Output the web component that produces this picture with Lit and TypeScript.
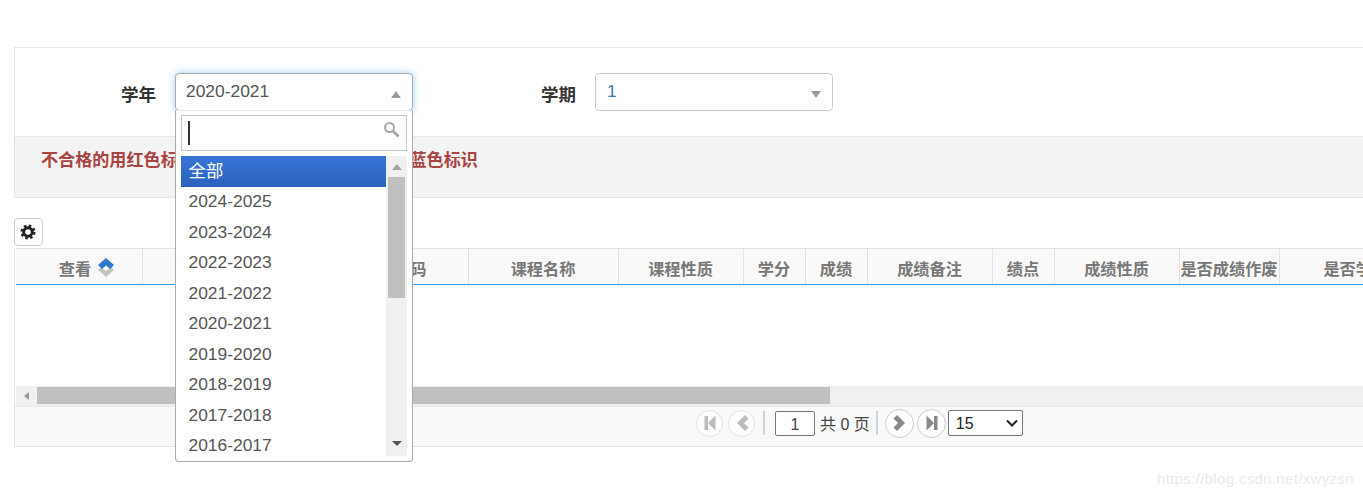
import { LitElement, html, css, svg } from "lit";
import { customElement } from "lit/decorators.js";

const YEARS = ["2024-2025","2023-2024","2022-2023","2021-2022","2020-2021","2019-2020","2018-2019","2017-2018","2016-2017"];
const COLS: [string, number][] = [
  ["", 126],["", 52],["课程代码", 148],["课程名称", 150],["课程性质", 125],["学分", 62],["成绩", 62],
  ["成绩备注", 125],["绩点", 62],["成绩性质", 125],["是否成绩作废", 100],["是否学位课程", 186],
];

const first = svg`<rect x="8.500" y="7" width="3.500" height="14"/><path d="M19.500 6.500v15L12 14z"/>`;
const prev = svg`<path d="M17 6l3.500 3.500-4.500 4.500 4.500 4.500-3.500 3.500-8-8z"/>`;
const next = svg`<path d="M12 6l-3.500 3.500 4.500 4.500-4.500 4.500 3.500 3.500 8-8z"/>`;
const last = svg`<rect x="17" y="7" width="3.500" height="14"/><path d="M9.500 6.500v15L17 14z"/>`;

@customElement("app-root")
export class AppRoot extends LitElement {
  static styles = css`
    :host { display: block; position: relative; height: 497px; overflow: hidden; background: #fff;
      font-family: "Liberation Sans", "Noto Sans CJK SC", sans-serif; color: #333; }
    * { box-sizing: border-box; }
    .page { width: 1400px; padding: 47px 0 0 14px; }
    .panel { border: 1px solid #e7e7e7; height: 151px; display: flex; flex-direction: column; }
    .form { height: 88px; display: flex; padding-top: 25px; }
    .label { font-size: 17.500px; font-weight: 700; color: #333; text-align: right; line-height: 38px; padding-top: 3px; }
    .l1 { width: 141px; margin-right: 19px; }
    .l2 { width: 163px; margin-right: 19px; }
    .field { width: 238px; height: 38px; position: relative; }
    .trigger { height: 38px; border: 1px solid #c9c9c9; border-radius: 4px; background: #fff; padding: 0 10px;
      font-size: 17.400px; line-height: 34px; color: #555; position: relative; }
    .trigger.blue { color: #3a7ca8; padding-left: 11px; }
    .trigger.open { border-color: #aaa; box-shadow: 0 0 9px rgba(82,168,236,.55); }
    .caret { position: absolute; right: 11px; top: 17px; width: 0; height: 0; border-left: 5px solid transparent;
      border-right: 5px solid transparent; border-top: 7px solid #999; }
    .caret.up { border-top: 0; border-bottom: 7px solid #999; }
    .menu { position: absolute; left: 0; top: 37px; width: 238px; height: 352px; background: #fff;
      border: 1px solid #aaa; border-top: 1px solid #e4e4e4; border-radius: 0 0 4px 4px; padding: 4px 5px 0; z-index: 3; }
    .search { height: 36px; border: 1px solid #c6c6c6; background: #fff; display: flex; align-items: center;
      justify-content: space-between; padding: 0 6px 0 6px; }
    .search svg { margin-top: -8px; }
    .cursor { width: 2px; height: 24px; background: #333; }
    .list { margin-top: 5px; height: 300px; display: flex; overflow: hidden; }
    .items { width: 205px; }
    .item { height: 30.500px; line-height: 29.500px; padding-left: 7.500px; font-size: 17.400px; color: #555; }
    .item.sel { color: #fff; background: linear-gradient(#3875d7, #2a62bc); height: 31px; line-height: 31px; }
    .bar { width: 21px; background: #f0f0f0; display: flex; flex-direction: column; align-items: center; }
    .arrow { height: 21px; display: flex; align-items: center; justify-content: center; }
    .thumb { width: 17px; height: 121px; background: #c0c0c0; }
    .spacer { flex: 1; }
    .tri-u { border-left: 5px solid transparent; border-right: 5px solid transparent; border-bottom: 6px solid #a3a3a3; }
    .tri-d { border-left: 5px solid transparent; border-right: 5px solid transparent; border-top: 5px solid #555; margin-bottom: 5px; }
    .notice { flex: 1; background: #f3f3f3; border-top: 1px solid #e7e7e7; padding: 13px 0 0 26px;
      font-size: 17.100px; line-height: 22px; font-weight: 700; color: #a94442; white-space: nowrap; }
    .tools { margin-top: 20px; height: 30px; }
    .gear { width: 29px; height: 28px; border: 1px solid #ccc; border-radius: 4px; background: #fff; display: flex;
      align-items: center; justify-content: center; padding-right: 2px; }
    .table { border-left: 1px solid #e7e7e7; }
    .head { display: flex; height: 37px; border-top: 1px solid #e2e2e2; margin-left: 1px; background: #f9f9f9;
      border-bottom: 1px solid #3a96dd; }
    .th { flex: none; border-right: 1px solid #e2e2e2; display: flex; align-items: center; justify-content: center;
      gap: 7px; font-size: 16.200px; font-weight: 700; color: #777; white-space: nowrap; padding: 3px 1px 0 0; }
    .th.first { padding-left: 16px; }
    .body { height: 101px; }
    .hscroll { height: 20px; margin-left: 1px; background: #f0f0f0; display: flex; align-items: center; }
    .hleft { width: 21px; display: flex; justify-content: center; }
    .tri-l { border-top: 4px solid transparent; border-bottom: 4px solid transparent; border-right: 5px solid #999; }
    .hthumb { width: 793px; height: 17px; background: #c0c0c0; margin-top: -1px; }
    .pager { height: 41px; background: #f9f9f9; border-top: 1px solid #e7e7e7; border-bottom: 1px solid #e3e3e3;
      display: flex; align-items: center; padding: 0 0 7px 681px; font-size: 16px; color: #444; }
    .pg { width: 29px; height: 29px; border-radius: 50%; border: 1px solid #ccc; background: #fdfdfd; flex: none; margin-right: 3px; }
    .pg svg { display: block; fill: #888; margin: -.5px; }
    .pg.off { border-color: #e2e2e2; width: 27px; height: 27px; margin-right: 5px; }
    .pg.off svg { fill: #bbb; margin: -1.500px; }
    .sep { width: 2px; height: 24px; background: #c9d5e0; flex: none; }
    .sep.a { margin-left: 3px; }
    .sep.b { margin-right: 7px; }
    .num { width: 40px; height: 25px; margin-left: 10px; border: 1px solid #767676; border-radius: 2px; background: #fff;
      text-align: center; font: 16px "Liberation Sans", sans-serif; color: #444; padding: 3px 0 0; }
    .total { margin: 0 6px 0 5px; white-space: nowrap; }
    .sel-wrap { position: relative; width: 75px; height: 26px; margin-left: -1px; flex: none; }
    select { appearance: none; width: 75px; height: 26px; border: 1px solid #767676; border-radius: 2px; padding: 1px 0 0 7px;
      font: 16px "Liberation Sans", sans-serif; color: #222; background: #fff; display: block; }
    .chev { position: absolute; right: 5px; top: 9px; pointer-events: none; }
    .wm { position: absolute; left: 1157px; top: 470px; font-size: 15px; line-height: 17px; color: #e9e9e9; letter-spacing: .33px; }
  `;

  private pg(icon: unknown, off: boolean) {
    return html`<div class="pg ${off ? "off" : ""}"><svg width="28" height="28" viewBox="0 0 28 28">${icon}</svg></div>`;
  }

  render() {
    return html`
      <div class="page">
        <div class="panel">
          <div class="form">
            <div class="label l1">学年</div>
            <div class="field">
              <div class="trigger open">2020-2021<span class="caret up"></span></div>
              <div class="menu">
                <div class="search">
                  <div class="cursor"></div>
                  <svg width="17" height="17" viewBox="0 0 17 17" fill="none" stroke="#a6a6a6">
                    <circle cx="6.500" cy="6.500" r="4.500" stroke-width="2"/>
                    <path d="M10 10l5.500 5.500" stroke-width="3"/>
                  </svg>
                </div>
                <div class="list">
                  <div class="items">
                    <div class="item sel">全部</div>
                    ${YEARS.map((y) => html`<div class="item">${y}</div>`)}
                  </div>
                  <div class="bar">
                    <div class="arrow"><div class="tri-u"></div></div>
                    <div class="thumb"></div>
                    <div class="spacer"></div>
                    <div class="arrow"><div class="tri-d"></div></div>
                  </div>
                </div>
              </div>
            </div>
            <div class="label l2">学期</div>
            <div class="field">
              <div class="trigger blue">1<span class="caret"></span></div>
            </div>
          </div>
          <div class="notice">不合格的用红色标识，补考或 重修后 合格的都用蓝色标识</div>
        </div>
        <div class="tools">
          <div class="gear">
            <svg width="16" height="16" viewBox="0 0 16 16" fill="none" stroke="#222">
              <circle cx="8" cy="8" r="4.300" stroke-width="3"/>
              <circle cx="8" cy="8" r="6.300" stroke-width="2.500" stroke-dasharray="2.500 2.450"/>
            </svg>
          </div>
        </div>
        <div class="table">
          <div class="head">
            <div class="th first" style="width:127px">查看
              <svg width="16" height="20" viewBox="0 0 16 20">
                <path d="M8 19l8-7-3-3-5 4-5-4-3 3z" fill="#c4c4c4"/>
                <path d="M8 0l8 7-4 4-4-3.500L4 11 0 7z" fill="#2f7bcb"/>
              </svg>
            </div>
            ${COLS.map(([t, w]) => html`<div class="th" style="width:${w}px">${t}</div>`)}
          </div>
          <div class="body"></div>
          <div class="hscroll">
            <div class="hleft"><div class="tri-l"></div></div>
            <div class="hthumb"></div>
          </div>
          <div class="pager">
            ${this.pg(first, true)}${this.pg(prev, true)}
            <div class="sep a"></div>
            <input class="num" value="1" />
            <span class="total">共 0 页</span>
            <div class="sep b"></div>
            ${this.pg(next, false)}${this.pg(last, false)}
            <div class="sel-wrap">
              <select><option>15</option></select>
              <svg class="chev" width="12" height="8" viewBox="0 0 12 8" fill="none" stroke="#222" stroke-width="2"><path d="M1 1.500l5 5 5-5"/></svg>
            </div>
          </div>
        </div>
      </div>
      <div class="wm">https://blog.csdn.net/xwyzsn</div>
    `;
  }
}
